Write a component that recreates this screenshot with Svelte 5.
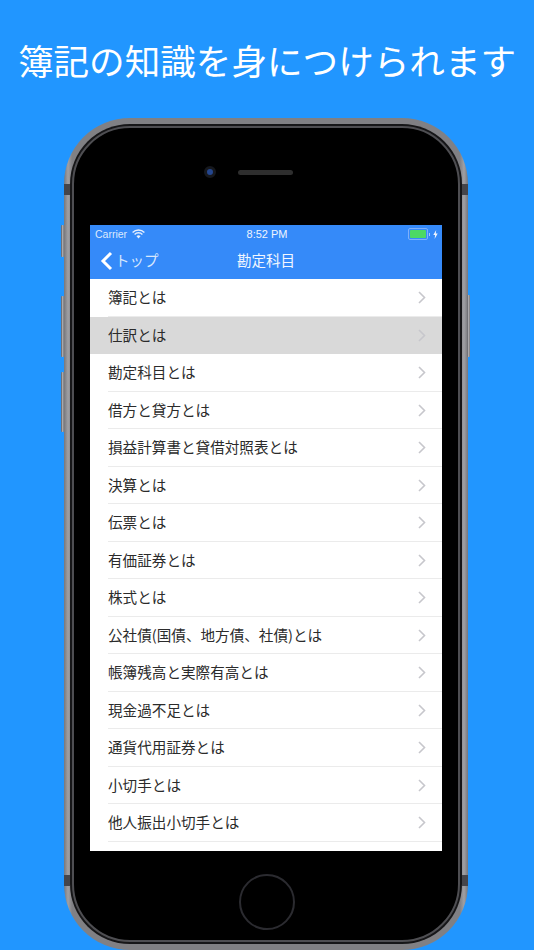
<script>
    const items = [
        '簿記とは',
        '仕訳とは',
        '勘定科目とは',
        '借方と貸方とは',
        '損益計算書と貸借対照表とは',
        '決算とは',
        '伝票とは',
        '有価証券とは',
        '株式とは',
        '公社債(国債、地方債、社債)とは',
        '帳簿残高と実際有高とは',
        '現金過不足とは',
        '通貨代用証券とは',
        '小切手とは',
        '他人振出小切手とは',
        ''
    ];
</script>

<div class="page">
    <h1>簿記の知識を身につけられます</h1>

    <div class="phone">
        <span class="btn mute"></span>
        <span class="btn vol-up"></span>
        <span class="btn vol-down"></span>
        <span class="btn power"></span>
        <span class="band top-l"></span>
        <span class="band top-r"></span>
        <span class="band bot-l"></span>
        <span class="band bot-r"></span>

        <div class="inner-ring">
            <div class="bezel">
                <div class="top-part">
                    <span class="camera"></span>
                    <span class="speaker"></span>
                </div>

                <div class="screen">
                    <div class="status">
                        <span class="carrier">Carrier</span>
                        <svg class="wifi" width="13" height="10" viewBox="0 0 13 10">
                            <path d="M0.6 3.4 A8.4 8.4 0 0 1 12.4 3.4" fill="none" stroke="#e6effd" stroke-width="1.4" />
                            <path d="M2.6 5.4 A5.6 5.6 0 0 1 10.4 5.4" fill="none" stroke="#e6effd" stroke-width="1.4" />
                            <path d="M4.5 7.3 A2.9 2.9 0 0 1 8.5 7.3 L6.5 9.5 Z" fill="#e6effd" />
                        </svg>
                        <span class="time">8:52 PM</span>
                        <span class="battery"><span class="level"></span></span>
                        <span class="nub"></span>
                        <svg class="bolt" width="5" height="9" viewBox="0 0 5 9">
                            <path d="M3.2 0 L0.3 5 H2.1 L1.6 9 L4.7 3.6 H2.8 Z" fill="#f0f5fe" />
                        </svg>
                    </div>
                    <div class="nav">
                        <div class="back">
                            <svg width="14" height="22" viewBox="0 0 14 22">
                                <path d="M11 3 L3 11 L11 19" fill="none" stroke="#fff" stroke-width="3" />
                            </svg>
                            <span>トップ</span>
                        </div>
                        <div class="nav-title">勘定科目</div>
                    </div>

                    <div class="list">
                        {#each items as item, i}
                            <div class="row" class:selected={i === 1}>
                                <div class="row-inner">
                                    <span>{item}</span>
                                    {#if item}
                                        <svg class="chev" width="8" height="13" viewBox="0 0 8 13">
                                            <path d="M1 1 L6.5 6.5 L1 12" fill="none" stroke="#c7c7cc" stroke-width="1.6" />
                                        </svg>
                                    {/if}
                                </div>
                            </div>
                        {/each}
                    </div>
                </div>

                <div class="bottom-part">
                    <span class="home"></span>
                </div>
            </div>
        </div>
    </div>
</div>

<style>
    :global(body) { margin: 0; background: #2196ff; }
    .page {
        width: 534px;
        height: 950px;
        overflow: hidden;
        background: #2196ff;
        font-family: "Noto Sans CJK JP", "Liberation Sans", sans-serif;
    }
    h1 {
        margin: 0;
        height: 118px;
        padding-top: 36px;
        box-sizing: border-box;
        text-align: center;
        color: #fff;
        font-size: 35.6px;
        line-height: 48px;
        font-weight: 400;
        white-space: nowrap;
    }
    .phone {
        position: relative;
        width: 404px;
        height: 832px;
        margin-left: 64px;
        box-sizing: border-box;
        padding: 6px;
        border-radius: 66px;
        background: linear-gradient(90deg, #77777b, #a0a0a4 1%, #808084 2%, #808084 98%, #a0a0a4 99%, #77777b);
    }
    .inner-ring {
        height: 100%;
        box-sizing: border-box;
        padding: 2px;
        border-radius: 60px;
        background: #161618;
    }
    .bezel {
        height: 100%;
        box-sizing: border-box;
        border: 2px solid #4e4e52;
        border-radius: 58px;
        background: #000;
        display: flex;
        flex-direction: column;
        align-items: center;
    }
    .top-part {
        height: 97px;
        width: 100%;
        flex-shrink: 0;
        display: flex;
        justify-content: center;
        align-items: flex-start;
        gap: 22px;
        padding: 40px 35px 0 0;
        box-sizing: border-box;
    }
    .camera {
        width: 6px;
        height: 6px;
        margin-top: -2px;
        border-radius: 50%;
        background: #24468e;
        border: 3px solid #16181d;
    }
    .speaker {
        width: 55px;
        height: 5px;
        margin-top: 2px;
        border-radius: 3px;
        background: #2e2e2e;
    }
    .screen {
        width: 352px;
        height: 626px;
        background: #fff;
        overflow: hidden;
        flex-shrink: 0;
    }
    .status {
        height: 18px;
        background: #358af9;
        color: #dce9fd;
        display: flex;
        align-items: center;
        padding: 0 4px 0 5px;
        font-family: "Liberation Sans", sans-serif;
        font-size: 10.5px;
        position: relative;
    }
    .wifi { margin-left: 5px; }
    .time {
        position: absolute;
        left: 2px;
        right: 0;
        text-align: center;
        color: #eef4fe;
        font-size: 11px;
    }
    .battery {
        margin-left: auto;
        width: 16px;
        height: 8px;
        padding: 1px;
        border: 1px solid #7fb0fb;
        border-radius: 2px;
        display: flex;
    }
    .level { flex: 1; background: #4cd964; border-radius: 1px; }
    .nub { width: 1px; height: 3px; background: #a5c8fc; margin: 0 3px 0 1px; }
    .nav {
        height: 36.3px;
        background: #358af9;
        position: relative;
        display: flex;
        align-items: center;
        justify-content: center;
    }
    .back {
        position: absolute;
        left: 10px;
        top: 7px;
        display: flex;
        align-items: center;
        color: #d8e7fd;
        font-size: 14.5px;
        line-height: 22px;
    }
    .back span { margin-left: 1px; margin-top: -3px; }
    .nav-title {
        color: #f2f7ff;
        font-size: 14.5px;
        margin-top: -3px;
    }
    .list { background: #fff; }
    .row {
        height: 37.5px;
        padding-left: 18px;
        color: #2b2b2b;
        font-size: 14.6px;
    }
    .row.selected { background: #d9d9d9; }
    .row-inner {
        height: 37.5px;
        box-sizing: border-box;
        padding-right: 16px;
        border-bottom: 1px solid #ebebeb;
        display: flex;
        align-items: center;
        justify-content: space-between;
        white-space: nowrap;
    }
    .row-inner span { margin-bottom: 2px; }
    .selected .row-inner { border-bottom-color: #d9d9d9; }
    .chev { flex-shrink: 0; }
    .bottom-part {
        flex: 1;
        width: 100%;
        display: flex;
        justify-content: center;
    }
    .home {
        width: 52px;
        height: 52px;
        margin-top: 23px;
        margin-left: 2px;
        border-radius: 50%;
        border: 2px solid #2b2b30;
    }
    .btn {
        position: absolute;
        width: 3px;
        border-radius: 1px;
        background: linear-gradient(90deg, #55555a, #a9a9ad 50%, #76767a);
    }
    .mute { left: -3px; top: 107px; height: 32px; }
    .vol-up { left: -3px; top: 178px; height: 61px; }
    .vol-down { left: -3px; top: 254px; height: 60px; }
    .power { right: -2px; top: 177px; height: 62px; }
    .band { position: absolute; width: 6px; height: 11px; background: #45454a; }
    .top-l { left: 0; top: 66px; }
    .top-r { right: 0; top: 66px; }
    .bot-l { left: 0; top: 757px; }
    .bot-r { right: 0; top: 757px; }
</style>
